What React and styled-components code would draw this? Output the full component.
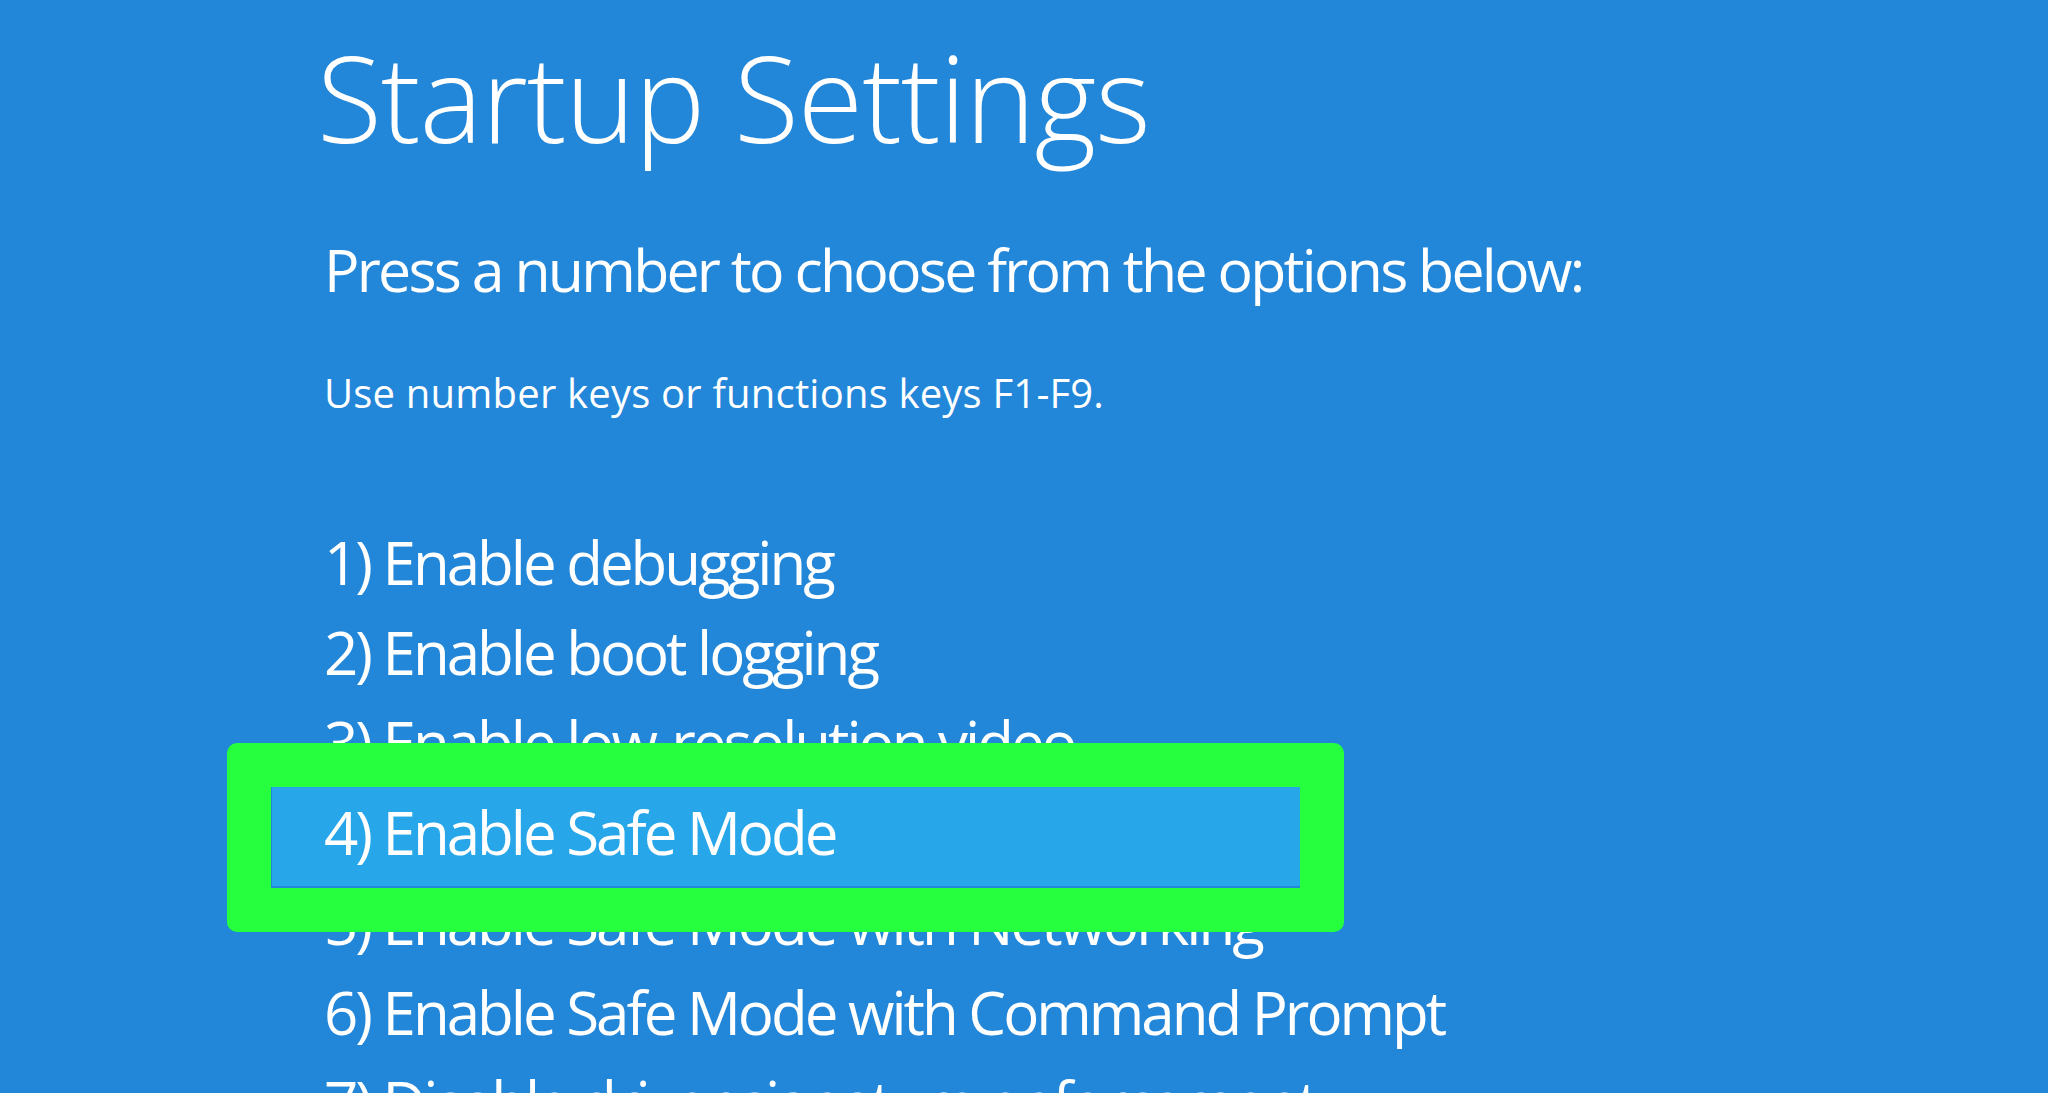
import styled, { createGlobalStyle } from 'styled-components'

const options = [
  'Enable debugging',
  'Enable boot logging',
  'Enable low-resolution video',
  'Enable Safe Mode',
  'Enable Safe Mode with Networking',
  'Enable Safe Mode with Command Prompt',
  'Disable driver signature enforcement',
  'Disable early launch anti-malware protection',
  'Disable automatic restart after failure',
]

const GlobalStyle = createGlobalStyle`
  html, body {
    margin: 0;
    padding: 0;
    background: #2286d9;
    overflow: hidden;
  }
  body {
    font-family: "Open Sans", "Noto Sans", sans-serif;
    color: #fff;
  }
`

const App = () => {
  const selected = 4

  return (
    <>
      <GlobalStyle />
      <Screen>
        <Title>Startup Settings</Title>
        <Prompt>Press a number to choose from the options below:</Prompt>
        <Hint>Use number keys or functions keys F1-F9.</Hint>
        <OptionList>
          {options.map((label, i) => (
            <Option key={label} $selected={i + 1 === selected}>
              {i + 1}) {label}
              {i + 1 === selected && <Callout />}
            </Option>
          ))}
        </OptionList>
      </Screen>
    </>
  )
}

const Screen = styled.div`
  height: 1093px;
  overflow: hidden;
  padding-left: 320px;
  box-sizing: border-box;
  display: flex;
  flex-direction: column;
  align-items: flex-start;
`

const Title = styled.h1`
  margin: 38px 0 0 -3px;
  font-size: 119px;
  line-height: 119px;
  font-weight: 300;
  letter-spacing: -1.1px;
`

const Prompt = styled.p`
  margin: 83px 0 0 4px;
  font-size: 59px;
  line-height: 59px;
  font-weight: 400;
  letter-spacing: -2.75px;
`

const Hint = styled.p`
  margin: 74px 0 0 4px;
  font-size: 40px;
  line-height: 40px;
  font-weight: 400;
  letter-spacing: 0.2px;
`

const OptionList = styled.ul`
  list-style: none;
  margin: 104px 0 0 -48px;
  padding: 0;
`

const Option = styled.li`
  position: relative;
  z-index: ${p => (p.$selected ? 1 : 0)};
  width: 1028px;
  box-sizing: border-box;
  padding: 0 0 ${p => (p.$selected ? '9px' : '0')} 52px;
  margin-bottom: ${p => (p.$selected ? '-9px' : '0')};
  font-size: 60px;
  line-height: 90px;
  letter-spacing: -3px;
  white-space: nowrap;
  background: ${p => (p.$selected ? '#27a6ea' : 'transparent')};
`

const Callout = styled.span`
  position: absolute;
  top: -44px;
  right: -44px;
  bottom: -46px;
  left: -45px;
  border: 44px solid #25ff3d;
  border-radius: 10px;
  pointer-events: none;
`

export default App
